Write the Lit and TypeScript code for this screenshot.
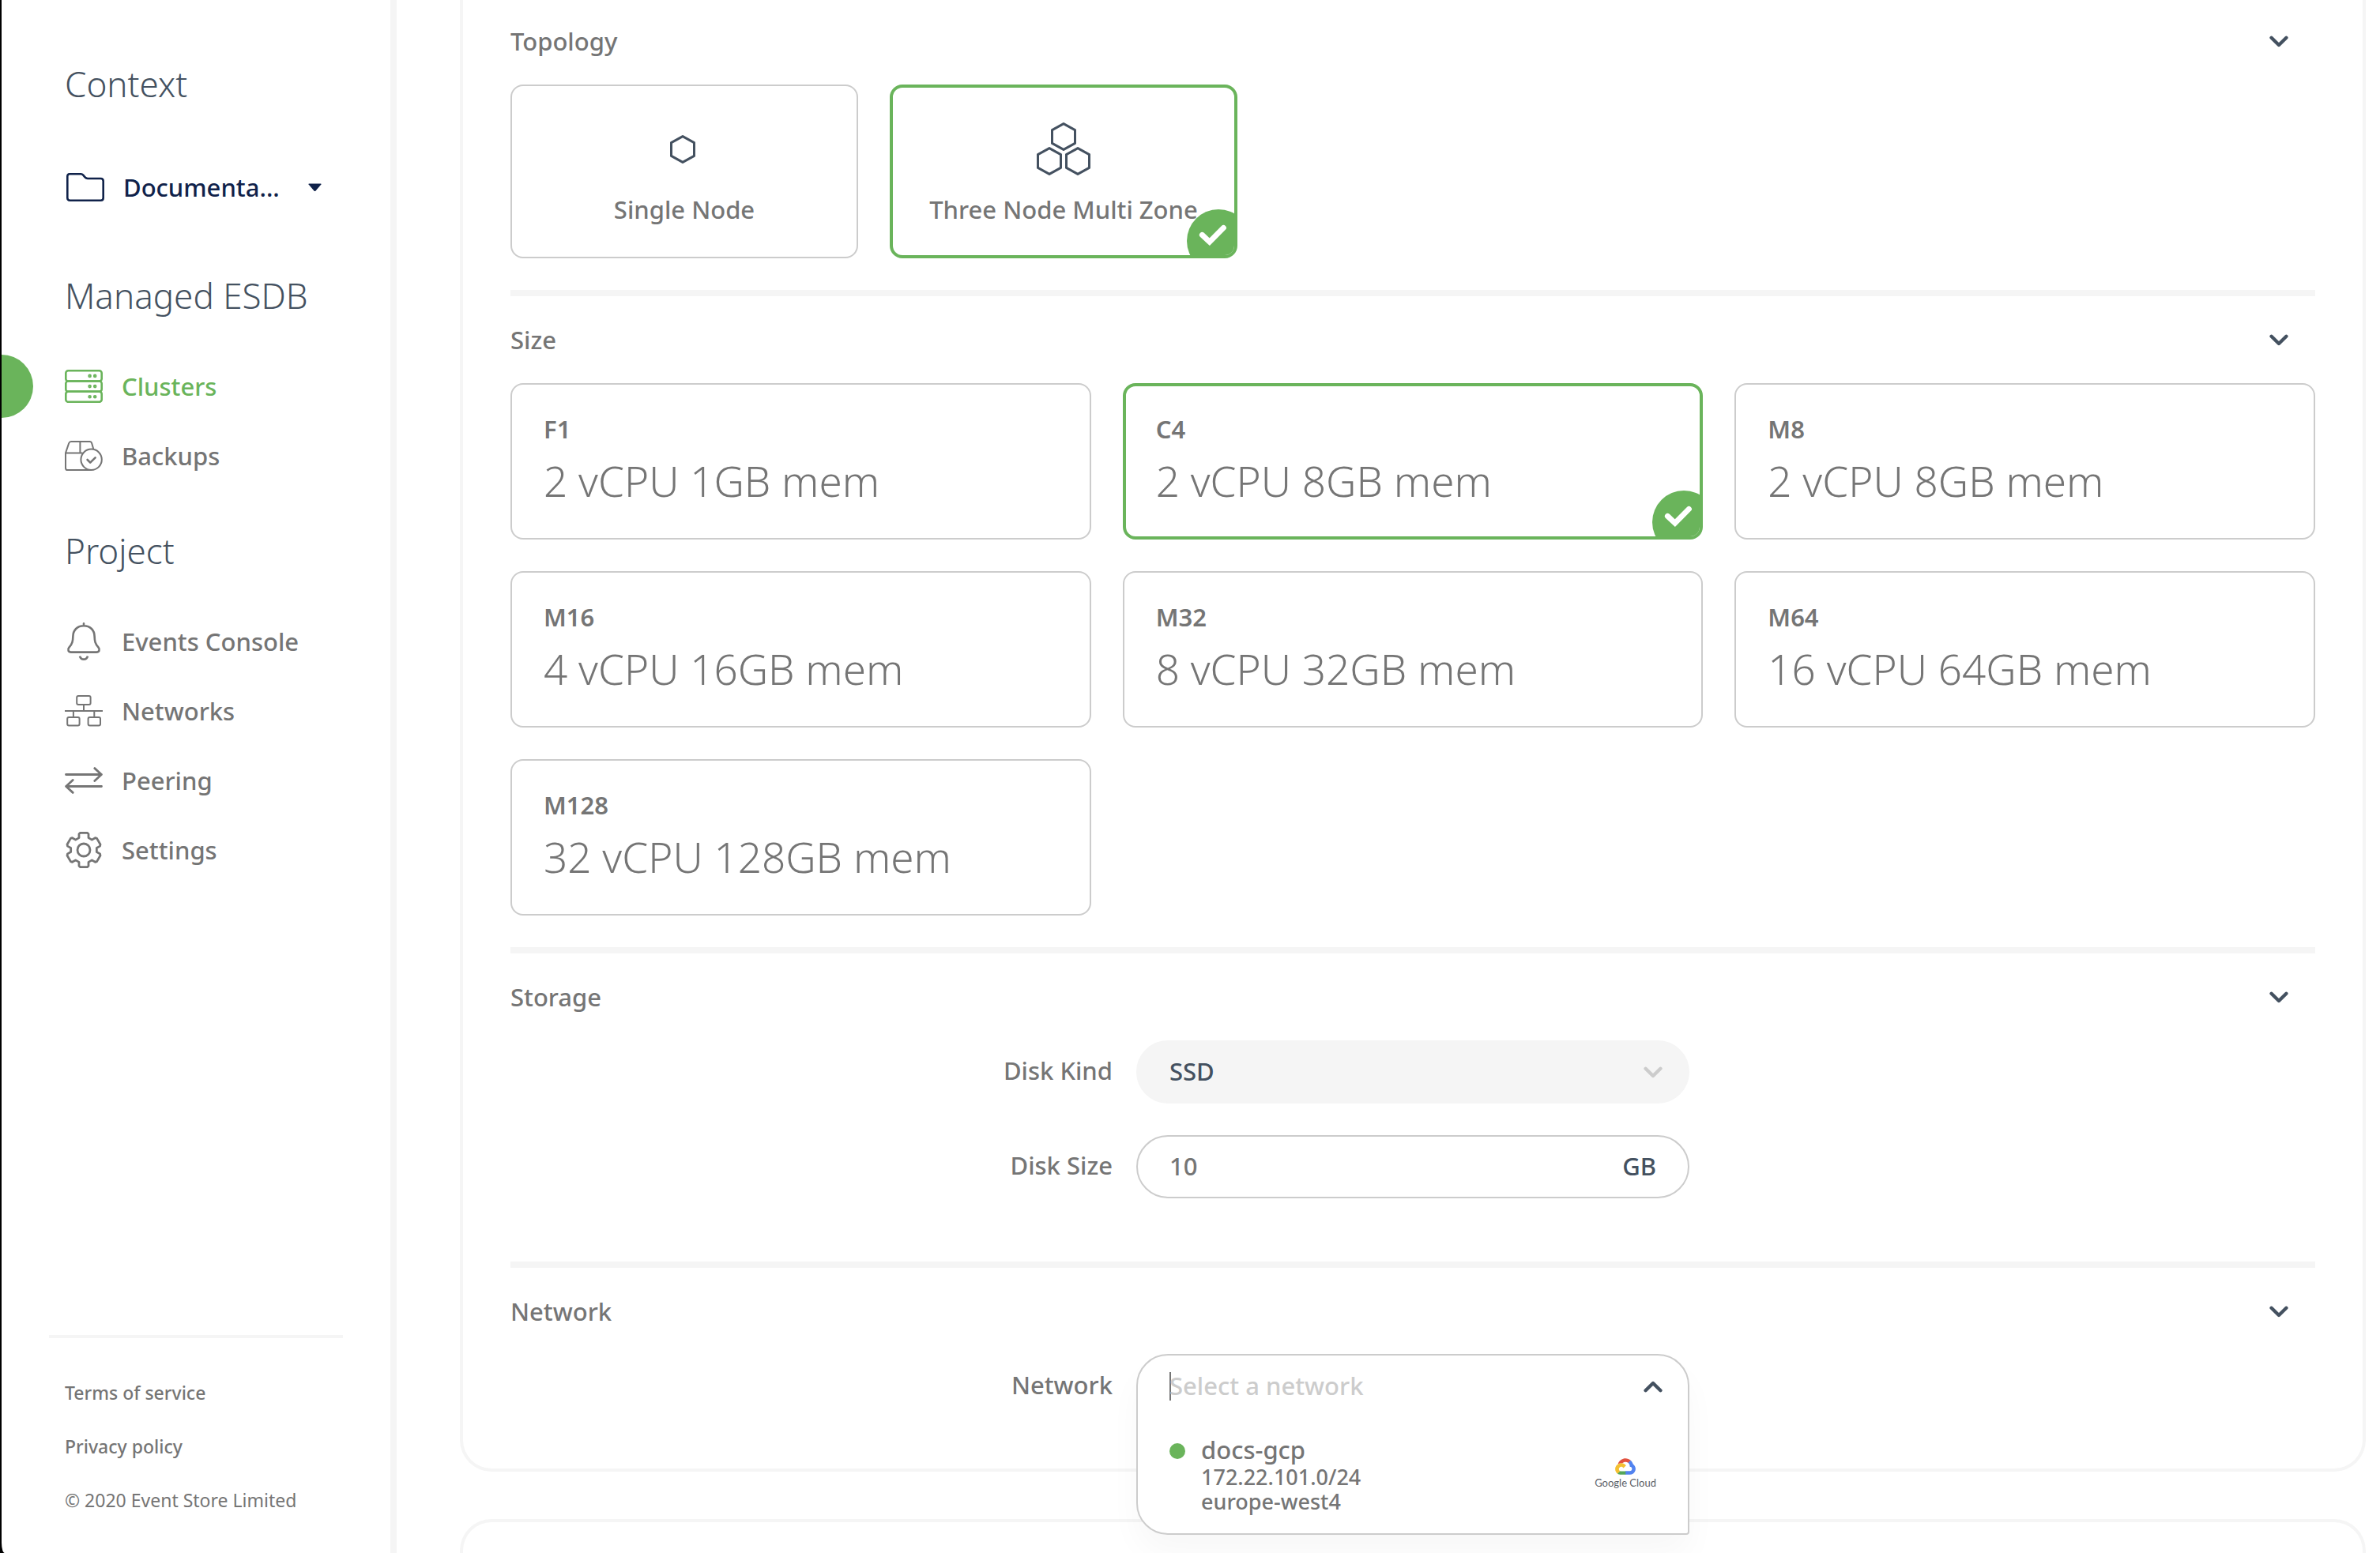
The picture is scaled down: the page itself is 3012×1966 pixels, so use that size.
import { LitElement, html, svg, css, nothing, type TemplateResult } from "lit";
import { customElement, state } from "lit/decorators.js";
import { classMap } from "lit/directives/class-map.js";

/* ---------- icons ---------- */

const folderIcon = html`<svg class="icon" width="50" height="36" viewBox="0 0 50 36" fill="none" stroke="currentColor" stroke-width="2.6" stroke-linejoin="round" aria-hidden="true">
  <path d="M6 1.3H20.5Q22 1.3 23 2.4L25.6 5.4Q27 7 29 7H45.5Q48.7 7 48.7 10.2V31.5Q48.7 34.7 45.5 34.7H6.5Q3.3 34.7 3.3 31.5V4.3Q3.3 1.3 6 1.3Z" />
</svg>`;

const serverRow = (y: number) => svg`
  <rect x="1.3" y=${y} width="45.4" height="13.2" rx="3" />
  <circle cx="31.6" cy=${y + 6.6} r="1" />
  <circle cx="38.2" cy=${y + 6.6} r="1" />`;

const clustersIcon = html`<svg class="icon" width="48" height="42" viewBox="0 0 48 42" fill="none" stroke="currentColor" stroke-width="2.6" aria-hidden="true">
  ${[1.3, 14.5, 27.6].map(serverRow)}
</svg>`;

const backupsIcon = html`<svg class="icon" width="48" height="38" viewBox="0 0 48 38" fill="none" stroke="currentColor" stroke-width="2" stroke-linecap="round" stroke-linejoin="round" aria-hidden="true">
  <path d="M36 9.6L34.2 3.2Q33.6 1 31.4 1H8Q6 1 5.2 3L1 15.4V34.4Q1 37 3.6 37H33M1 15.4H22M19.4 1V15.4" />
  <circle cx="33.6" cy="23.8" r="13.2" />
  <path d="M28.6 24L32.2 27.6L38.6 21.4" stroke-width="2.6" />
</svg>`;

const bellIcon = html`<svg class="icon" width="48" height="48" viewBox="0 0 48 48" fill="none" stroke="currentColor" stroke-width="2.6" stroke-linecap="round" stroke-linejoin="round" aria-hidden="true">
  <path d="M24 1.3V4.2M24 4.2C15.6 4.2 10.6 10 10.4 17.4C10.2 24 9.6 27 5.6 31.4C3 34.4 4.6 37.6 8 37.6H40C43.4 37.6 45 34.4 42.4 31.4C38.4 27 37.8 24 37.6 17.4C37.4 10 32.4 4.2 24 4.2Z" />
  <path d="M19 42.6C20.4 48 27.6 48 29 42.6" stroke-linecap="butt" />
</svg>`;

const networksIcon = html`<svg class="icon" width="48" height="40" viewBox="0 0 48 40" fill="none" stroke="currentColor" stroke-width="2" aria-hidden="true">
  <rect x="15.2" y="1" width="17.4" height="11" rx="2" />
  <rect x="3.2" y="28" width="15.4" height="10.6" rx="2" />
  <rect x="29.6" y="28" width="15.4" height="10.6" rx="2" />
  <path d="M0 20H48M24 12V20M10.9 20V28M37.3 20V28" />
</svg>`;

const peeringIcon = html`<svg class="icon" width="48" height="34" viewBox="0 0 48 34" fill="none" stroke="currentColor" stroke-width="2.8" stroke-linecap="round" stroke-linejoin="round" aria-hidden="true">
  <path d="M1.5 9.5H46.4M37.8 1.6L46.4 9.5L37.8 17.6M46.5 24.5H1.6M10.2 16.4L1.6 24.5L10.2 32.4" />
</svg>`;

/** Outline of a six-toothed gear centred on the origin. */
const gearPath = (() => {
  const tooth = [[-6, -15.4], [-6, -20.2], [-4.4, -21.7], [4.4, -21.7], [6, -20.2], [6, -15.4]];
  const points: string[] = [];
  for (let k = 0; k < 6; k++) {
    const a = (k * Math.PI) / 3;
    for (const [x, y] of tooth) {
      points.push(`${(x * Math.cos(a) - y * Math.sin(a)).toFixed(2)} ${(x * Math.sin(a) + y * Math.cos(a)).toFixed(2)}`);
    }
  }
  return `M${points.join("L")}Z`;
})();

const settingsIcon = html`<svg class="icon" width="48" height="48" viewBox="-24 -24 48 48" fill="none" stroke="currentColor" stroke-width="2.8" stroke-linejoin="round" aria-hidden="true">
  <path d=${gearPath} />
  <circle r="8" />
</svg>`;

const hexagon = (cx: number, cy: number) =>
  svg`<path d=${`M${cx} ${cy - 16.4}L${cx + 14.5} ${cy - 8.4}V${cy + 8.4}L${cx} ${cy + 16.4}L${cx - 14.5} ${cy + 8.4}V${cy - 8.4}Z`} />`;

const singleNodeIcon = html`<svg width="38" height="36" viewBox="0 0 38 36" class="nodes" aria-hidden="true">${hexagon(17, 18)}</svg>`;
const threeNodeIcon = html`<svg width="68" height="68" viewBox="0 0 68 68" class="nodes" aria-hidden="true">
  ${hexagon(34, 18)}${hexagon(16, 49)}${hexagon(52, 49)}
</svg>`;

const chevron = (cls: string, up = false) => html`<svg class=${cls} width="24" height="15" viewBox="0 0 24 15" fill="none" stroke="currentColor" stroke-width="4.4" stroke-linecap="round" stroke-linejoin="round" aria-hidden="true">
  <path d=${up ? "M2.6 12.2L12 3L21.4 12.2" : "M2.6 2.8L12 12L21.4 2.8"} />
</svg>`;

const googleCloudIcon = html`<svg width="26" height="21" viewBox="5 14 118 94" aria-hidden="true">
  <path fill="#e2513f" d="M80.6 40.3h.4l-.2-.2 14-14v-.3c-11.8-10.4-28.1-14-43.2-9.5C36.5 20.8 24.9 32.8 20.7 48c.2-.1.5-.2.8-.2 5.2-3.4 11.4-5.4 17.9-5.4 2.2 0 4.3.2 6.4.6.1-.1.2-.1.3-.1 9-9.9 24.2-11.1 34.6-2.6h-.1z" />
  <path fill="#5283f0" d="M108.1 47.8c-2.3-8.5-7.1-16.2-13.8-22.1L80 39.9c6 4.9 9.5 12.3 9.3 20v2.5c16.9 0 16.9 25.2 0 25.2H63.9v20h-.1l.1.2h25.4c14.6.1 27.5-9.3 31.8-23.1 4.3-13.8-1-28.8-13-36.9z" />
  <path fill="#54a65a" d="M39 107.9h26.3V87.7H39c-1.9 0-3.7-.4-5.4-1.1l-15.2 14.6v.2c6 4.3 13.2 6.6 20.7 6.6h-.1z" />
  <path fill="#f4c031" d="M40.2 41.9c-14.9.1-28.1 9.3-32.9 22.8-4.8 13.6 0 28.5 11.8 37.3l15.6-14.9c-8.6-3.7-10.6-14.5-4-20.8 6.6-6.4 17.8-4.4 21.7 3.8L68 55.2C61.4 46.9 51.1 42 40.2 42.1v-.2z" />
</svg>`;

const selectedBadge = html`<svg class="badge" width="80" height="80" viewBox="0 0 80 80" aria-hidden="true">
  <circle cx="40" cy="40" r="40" fill="#6ab45b" />
  <path d="M19.4 32.4L28.8 41.2L46.4 23.4" fill="none" stroke="#fff" stroke-width="7" stroke-linecap="round" stroke-linejoin="miter" />
</svg>`;

/* ---------- data ---------- */

interface NavItem { label: string; icon: TemplateResult; active?: boolean }

const managedNav: NavItem[] = [
  { label: "Clusters", icon: clustersIcon, active: true },
  { label: "Backups", icon: backupsIcon },
];

const projectNav: NavItem[] = [
  { label: "Events Console", icon: bellIcon },
  { label: "Networks", icon: networksIcon },
  { label: "Peering", icon: peeringIcon },
  { label: "Settings", icon: settingsIcon },
];

const topologies = [
  { id: "single", label: "Single Node", icon: singleNodeIcon },
  { id: "three", label: "Three Node Multi Zone", icon: threeNodeIcon },
];

const sizes = [
  { id: "F1", spec: "2 vCPU 1GB mem" },
  { id: "C4", spec: "2 vCPU 8GB mem" },
  { id: "M8", spec: "2 vCPU 8GB mem" },
  { id: "M16", spec: "4 vCPU 16GB mem" },
  { id: "M32", spec: "8 vCPU 32GB mem" },
  { id: "M64", spec: "16 vCPU 64GB mem" },
  { id: "M128", spec: "32 vCPU 128GB mem" },
];

/* ---------- sidebar ---------- */

@customElement("side-bar")
export class SideBar extends LitElement {
  static styles = css`
    :host {
      display: flex;
      flex-direction: column;
      box-sizing: border-box;
      border-right: 8px solid #f5f5f5;
      padding: 75px 0 33px;
      overflow: hidden;
      color: #757575;
    }
    .heading {
      margin: 0;
      padding-left: 80px;
      font-size: 44px;
      font-weight: 350;
      line-height: 62px;
      color: #445160;
    }
    .icon { flex: none; }
    .context {
      display: flex;
      align-items: center;
      gap: 24px;
      margin: 76px 0 82px;
      padding: 0 0 0 80px;
      height: 48px;
      border: 0;
      background: none;
      font: inherit;
      color: #10224a;
    }
    .context-name { width: 200px; text-align: left; }
    .caret { margin-left: 10px; }
    .list {
      list-style: none;
      margin: 40px 0 45px;
      padding: 0;
    }
    .item {
      position: relative;
      display: flex;
      align-items: center;
      gap: 24px;
      height: 88px;
      padding-left: 80px;
      color: inherit;
      text-decoration: none;
    }
    .item .icon-slot { display: flex; width: 48px; }
    .item.active { color: #6ab45b; }
    .item.active::before {
      content: "";
      position: absolute;
      left: -40px;
      top: 4px;
      width: 80px;
      height: 80px;
      border-radius: 50%;
      background: #6ab45b;
    }
    .footer {
      display: flex;
      flex-direction: column;
      margin: auto 60px 0;
      padding: 35px 0 0 20px;
      border-top: 4px solid #f5f5f5;
      font-size: 23px;
      line-height: 68px;
    }
    .footer a { color: inherit; text-decoration: none; }
    .copyright { font-weight: 400; white-space: nowrap; }
  `;

  private renderNav(title: string, items: NavItem[]) {
    return html`
      <h2 class="heading">${title}</h2>
      <ul class="list">
        ${items.map(
          (item) => html`<li>
            <a href="#" class=${classMap({ item: true, active: !!item.active })} aria-current=${item.active ? "page" : nothing}>
              <span class="icon-slot">${item.icon}</span>${item.label}
            </a>
          </li>`
        )}
      </ul>
    `;
  }

  render() {
    return html`
      <h2 class="heading">Context</h2>
      <button class="context" type="button">
        ${folderIcon}
        <span class="context-name">Documenta...</span>
        <svg class="caret" width="17" height="11" viewBox="0 0 17 11" fill="currentColor" aria-hidden="true"><path d="M1 0.5H16Q17 0.8 16.4 1.6L9.6 9.6Q8.5 10.6 7.4 9.6L0.6 1.6Q0 0.8 1 0.5Z" /></svg>
      </button>
      <nav>${this.renderNav("Managed ESDB", managedNav)}${this.renderNav("Project", projectNav)}</nav>
      <footer class="footer">
        <a href="#">Terms of service</a>
        <a href="#">Privacy policy</a>
        <span class="copyright">© 2020 Event Store Limited</span>
      </footer>
    `;
  }
}

/* ---------- cluster form ---------- */

@customElement("cluster-form")
export class ClusterForm extends LitElement {
  static styles = css`
    :host { display: block; color: #757575; }
    .section + .section { border-top: 8px solid #f5f5f5; }
    .title { margin: 0; font: inherit; }
    .toggle {
      display: flex;
      align-items: center;
      justify-content: space-between;
      width: 100%;
      height: 110px;
      padding: 0 34px 0 0;
      border: 0;
      background: none;
      font: inherit;
      color: inherit;
    }
    .toggle-chevron { color: #445160; }
    .cards {
      display: grid;
      gap: 40px;
      margin: 0;
      padding: 0 0 40px;
      border: 0;
    }
    .topologies { grid-template-columns: repeat(auto-fill, 440px); }
    .sizes { grid-template-columns: repeat(3, minmax(0, 1fr)); }
    .card {
      position: relative;
      display: flex;
      flex-direction: column;
      box-sizing: border-box;
      overflow: hidden;
      border: 2px solid #ccc;
      border-radius: 16px;
      background: #fff;
    }
    .card.selected { border: 4px solid #6ab45b; }
    .radio {
      position: absolute;
      opacity: 0;
      margin: 0;
    }
    .badge {
      position: absolute;
      right: -20px;
      bottom: -22px;
    }
    .topology {
      align-items: center;
      justify-content: center;
      gap: 22px;
      height: 220px;
      padding-top: 6px;
    }
    .topology-icon {
      display: flex;
      align-items: center;
      height: 68px;
    }
    .nodes {
      fill: none;
      stroke: #445160;
      stroke-width: 3;
      stroke-linejoin: round;
    }
    .size {
      justify-content: center;
      gap: 6px;
      height: 198px;
      padding: 4px 40px 0;
    }
    .size.selected { padding: 4px 38px 0; }
    .size-name { font-weight: 600; }
    .size-spec {
      font-size: 53px;
      font-weight: 300;
      line-height: 80px;
      white-space: nowrap;
    }
    .rows {
      display: grid;
      grid-template-columns: 1fr minmax(0, 700px) 1fr;
      column-gap: 30px;
      row-gap: 40px;
    }
    .storage { padding-bottom: 80px; }
    .network { padding-bottom: 64px; }
    .row-label {
      grid-column: 1;
      justify-self: end;
      line-height: 77px;
    }
    .field {
      display: flex;
      align-items: center;
      box-sizing: border-box;
      height: 80px;
      padding: 0 40px 3px;
      border: 2px solid #ccc;
      border-radius: 40px;
      background: #fff;
      color: #445160;
    }
    .field.filled {
      display: grid;
      align-items: center;
      padding: 0;
      border-color: #f5f5f5;
      background: #f5f5f5;
    }
    .input, .select {
      box-sizing: border-box;
      min-width: 0;
      border: 0;
      padding: 0;
      outline: none;
      background: none;
      font: inherit;
      color: #757575;
    }
    .input { flex: 1; }
    .input::placeholder { color: #ccc; opacity: 1; }
    .select {
      grid-area: 1 / 1;
      width: 100%;
      height: 100%;
      padding: 0 40px 3px;
      appearance: none;
      color: #445160;
    }
    .select-chevron {
      grid-area: 1 / 1;
      justify-self: end;
      margin-right: 32px;
      pointer-events: none;
      color: #ccc;
    }
    .combo { position: relative; height: 80px; }
    .popup {
      position: absolute;
      z-index: 1;
      top: -1px;
      left: 0;
      right: 0;
      border: 2px solid #ccc;
      border-radius: 40px 40px 4px 40px;
      background: #fff;
      box-shadow: 0 24px 40px rgba(0, 0, 0, 0.03);
    }
    .search {
      display: flex;
      align-items: center;
      height: 78px;
      padding: 0 32px 0 40px;
    }
    .cursor {
      width: 2px;
      height: 36px;
      margin-right: -2px;
      background: #757575;
    }
    .search .input { padding-bottom: 3px; }
    .search-chevron { color: #445160; }
    .options { padding-bottom: 15px; }
    .option {
      display: flex;
      align-items: center;
      width: 100%;
      padding: 22px 40px 10px;
      border: 0;
      background: none;
      font: inherit;
      text-align: left;
      color: #757575;
    }
    .status {
      align-self: flex-start;
      flex: none;
      width: 20px;
      height: 20px;
      margin: 11px 20px 0 0;
      border-radius: 50%;
      background: #6ab45b;
    }
    .details { display: flex; flex: 1; flex-direction: column; }
    .network-name { line-height: 38px; }
    .address { font-size: 27px; line-height: 31px; }
    .provider {
      display: flex;
      flex-direction: column;
      align-items: center;
      font-family: "Lato", sans-serif;
      font-size: 13px;
      font-weight: 400;
      line-height: 20px;
      color: #5c6066;
    }
  `;

  @state() private topology = "three";
  @state() private size = "C4";

  private renderHeader(title: string) {
    return html`<h3 class="title">
      <button class="toggle" type="button" aria-expanded="true"><span>${title}</span>${chevron("toggle-chevron")}</button>
    </h3>`;
  }

  private renderTopology() {
    return html`<div class="cards topologies" role="radiogroup" aria-label="Topology">
      ${topologies.map((t) => {
        const selected = t.id === this.topology;
        return html`<label class=${classMap({ card: true, topology: true, selected })}>
          <input class="radio" type="radio" name="topology" .checked=${selected} @change=${() => (this.topology = t.id)} />
          <span class="topology-icon">${t.icon}</span>
          <span>${t.label}</span>
          ${selected ? selectedBadge : nothing}
        </label>`;
      })}
    </div>`;
  }

  private renderSizes() {
    return html`<div class="cards sizes" role="radiogroup" aria-label="Size">
      ${sizes.map((s) => {
        const selected = s.id === this.size;
        return html`<label class=${classMap({ card: true, size: true, selected })}>
          <input class="radio" type="radio" name="size" .checked=${selected} @change=${() => (this.size = s.id)} />
          <span class="size-name">${s.id}</span>
          <span class="size-spec">${s.spec}</span>
          ${selected ? selectedBadge : nothing}
        </label>`;
      })}
    </div>`;
  }

  render() {
    return html`
      <section class="section">${this.renderHeader("Topology")}${this.renderTopology()}</section>
      <section class="section">${this.renderHeader("Size")}${this.renderSizes()}</section>
      <section class="section">
        ${this.renderHeader("Storage")}
        <div class="rows storage">
          <label class="row-label" for="disk-kind">Disk Kind</label>
          <div class="field filled">
            <select class="select" id="disk-kind"><option>SSD</option></select>
            ${chevron("select-chevron")}
          </div>
          <label class="row-label" for="disk-size">Disk Size</label>
          <div class="field">
            <input class="input" id="disk-size" type="text" inputmode="numeric" .value=${"10"} />
            <span>GB</span>
          </div>
        </div>
      </section>
      <section class="section">
        ${this.renderHeader("Network")}
        <div class="rows network">
          <label class="row-label" for="network">Network</label>
          <div class="combo">
            <div class="popup">
              <div class="search">
                <span class="cursor"></span>
                <input class="input" id="network" type="text" role="combobox" aria-expanded="true" aria-controls="network-options" placeholder="Select a network" />
                ${chevron("search-chevron", true)}
              </div>
              <div class="options" id="network-options" role="listbox">
                <button class="option" type="button" role="option">
                  <span class="status"></span>
                  <span class="details">
                    <span class="network-name">docs-gcp</span>
                    <span class="address">172.22.101.0/24</span>
                    <span class="address">europe-west4</span>
                  </span>
                  <span class="provider">${googleCloudIcon}<span>Google Cloud</span></span>
                </button>
              </div>
            </div>
          </div>
        </div>
      </section>
    `;
  }
}

/* ---------- page ---------- */

@customElement("app-root")
export class AppRoot extends LitElement {
  static styles = css`
    :host {
      display: block;
      height: 100vh;
      overflow: hidden;
      background: #000;
      font-family: "Noto Sans", "Open Sans", sans-serif;
      font-size: 31px;
      font-weight: 500;
      line-height: 40px;
    }
    .shell {
      display: grid;
      grid-template-columns: 500px minmax(0, 1fr);
      height: 100%;
      margin-left: 2px;
      overflow: hidden;
      border-bottom-left-radius: 4px 13px;
      background: #fff;
    }
    .content {
      display: flex;
      flex-direction: column;
      gap: 60px;
      margin-top: -3px;
      padding: 0 18px 0 80px;
      min-height: 0;
    }
    .panel {
      flex: none;
      padding: 0 60px;
      border: 4px solid #f5f5f5;
      border-top: 0;
      border-radius: 0 0 40px 40px;
    }
    .next-panel {
      flex: 1;
      border: 4px solid #f5f5f5;
      border-bottom: 0;
      border-radius: 40px 40px 0 0;
    }
  `;

  render() {
    return html`
      <div class="shell">
        <side-bar></side-bar>
        <main class="content">
          <div class="panel"><cluster-form></cluster-form></div>
          <div class="next-panel"></div>
        </main>
      </div>
    `;
  }
}
